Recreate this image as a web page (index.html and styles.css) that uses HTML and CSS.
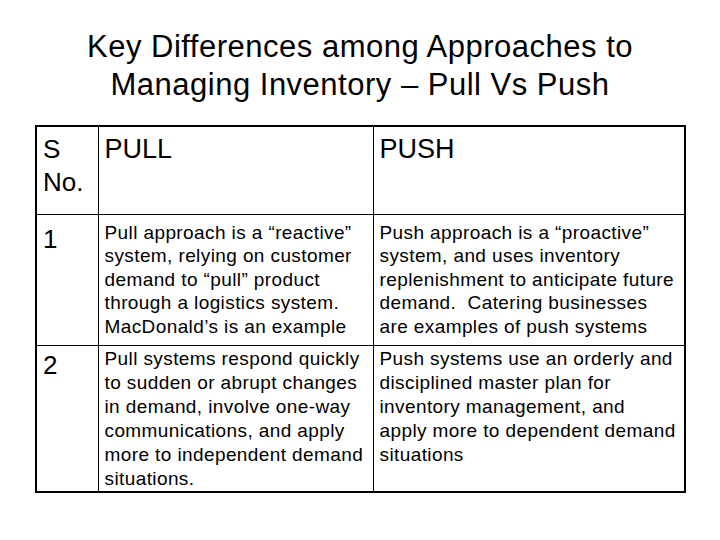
FILE: index.html
```html
<!DOCTYPE html>
<html>
<head>
<meta charset="utf-8">
<link rel="stylesheet" href="styles.css">
</head>
<body>
<div class="slide">
  <h1 class="title">Key Differences among Approaches to<br>Managing Inventory – Pull Vs Push</h1>
  <table class="grid">
    <colgroup>
      <col class="c-no">
      <col class="c-pull">
      <col class="c-push">
    </colgroup>
    <tr class="r-head">
      <td class="head-no">S<br>No.</td>
      <td class="head">PULL</td>
      <td class="head">PUSH</td>
    </tr>
    <tr class="r-one">
      <td class="num">1</td>
      <td class="body">Pull approach is a “reactive”<br>system, relying on customer<br>demand to “pull” product<br>through a logistics system.<br>MacDonald’s is an example</td>
      <td class="body">Push approach is a “proactive”<br>system, and uses inventory<br>replenishment to anticipate future<br>demand.&nbsp; Catering businesses<br>are examples of push systems</td>
    </tr>
    <tr class="r-two">
      <td class="num">2</td>
      <td class="body">Pull systems respond quickly<br>to sudden or abrupt changes<br>in demand, involve one-way<br>communications, and apply<br>more to independent demand<br>situations.</td>
      <td class="body">Push systems use an orderly and<br>disciplined master plan for<br>inventory management, and<br>apply more to dependent demand<br>situations</td>
    </tr>
  </table>
</div>
</body>
</html>
```

FILE: styles.css
```css
html, body {
  margin: 0;
  padding: 0;
  background: #ffffff;
}
.slide {
  width: 720px;
  height: 540px;
  box-sizing: border-box;
  padding-top: 28px;
  font-family: "Liberation Sans", Arial, sans-serif;
  color: #000;
}
.title {
  margin: 0;
  text-align: center;
  font-weight: normal;
  font-size: 31px;
  line-height: 38px;
  letter-spacing: 0.5px;
}
.grid {
  margin: 21px 0 0 35px;
  border-collapse: collapse;
  border: 2px solid #000;
  table-layout: fixed;
  width: 649px;
}
.c-no { width: 62px; }
.c-pull { width: 275px; }
.c-push { width: 312px; }
.grid td {
  border: 1px solid #000;
  vertical-align: top;
  padding: 6px 4px 0 6px;
  white-space: nowrap;
}
.r-head td { height: 81px; }
.r-one td { height: 122px; }
.r-two td { height: 142px; }
.head-no, .num {
  font-size: 26px;
  line-height: 33px;
}
.head {
  font-size: 27px;
  line-height: 33px;
}
.r-one .num { padding-top: 8px; }
.r-two .num { padding-top: 3px; }
.body {
  font-size: 19px;
  line-height: 23.4px;
  letter-spacing: 0.4px;
  padding-left: 7px;
}
.r-one .body { padding-top: 6px; }
.r-two .body {
  padding-top: 1px;
  line-height: 24px;
}
```
